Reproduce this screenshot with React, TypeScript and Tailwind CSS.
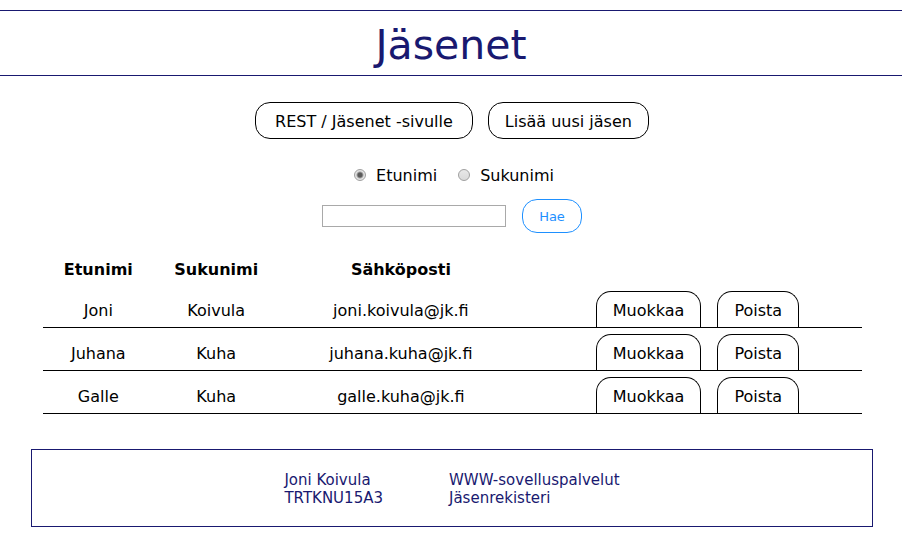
import { useState } from "react";

const members = [
  { first: "Joni", last: "Koivula", email: "joni.koivula@jk.fi" },
  { first: "Juhana", last: "Kuha", email: "juhana.kuha@jk.fi" },
  { first: "Galle", last: "Kuha", email: "galle.kuha@jk.fi" },
];

const pill =
  "rounded-[15px] border border-black pt-[9px] pb-[6px] text-center leading-5 text-black";
const tab =
  "h-9 rounded-t-[15px] border border-b-0 border-black px-4 pt-[2px] leading-5 text-black";
const cell = "border-b border-black pt-[10px]";
const radio =
  "size-3 appearance-none rounded-full border border-[#a0a0a0] bg-[linear-gradient(#e8e8e8,#dadada)] checked:bg-[radial-gradient(circle,#5a5a5a_2px,#e4e4e4_4px)]";

export default function App() {
  const [field, setField] = useState("etunimi");
  const [query, setQuery] = useState("");

  return (
    <div className="bg-white pt-[10px] font-['Verdana','DejaVu_Sans',sans-serif] text-base text-black">
      <header className="border-y border-[#191970] pt-[10px] pb-[6px] text-center">
        <h1 className="text-[41px] leading-12 text-[#191970]">Jäsenet</h1>
      </header>

      <nav className="mt-[26px] flex justify-center gap-[15px] pl-[2px]">
        <a href="#rest" className={`${pill} px-[19px]`}>REST / Jäsenet -sivulle</a>
        <a href="#uusi" className={`${pill} px-4`}>Lisää uusi jäsen</a>
      </nav>

      <form onSubmit={(e) => e.preventDefault()}>
        <div className="mt-[25px] flex justify-center gap-[21px] pl-[6px] leading-5">
          <label className="flex items-center gap-[10px]">
            <input type="radio" name="field" value="etunimi" className={radio} checked={field === "etunimi"} onChange={() => setField("etunimi")} />
            <span className="pt-[2px]">Etunimi</span>
          </label>
          <label className="flex items-center gap-[10px]">
            <input type="radio" name="field" value="sukunimi" className={radio} checked={field === "sukunimi"} onChange={() => setField("sukunimi")} />
            <span className="pt-[2px]">Sukunimi</span>
          </label>
        </div>
        <div className="mt-[13px] flex items-center justify-center gap-4 pl-[2px]">
          <input
            type="text"
            aria-label="Hakusana"
            value={query}
            onChange={(e) => setQuery(e.target.value)}
            className="h-[22px] w-[184px] border border-[#a9a9a9] px-1 text-[13px]"
          />
          <button type="submit" className="h-[34px] rounded-[15px] border border-[#1e90ff] px-4 pt-[2px] text-[13px] text-[#1e90ff]">
            Hae
          </button>
        </div>
      </form>

      <main className="mt-[26px] pr-10 pl-[43px]">
        <table className="w-full table-fixed border-separate border-spacing-0 text-center leading-5">
          <colgroup>
            <col className="w-[13.5%]" />
            <col className="w-[15.3%]" />
            <col className="w-[29.8%]" />
            <col />
          </colgroup>
          <thead>
            <tr className="h-[26px] align-top">
              <th scope="col" className="pt-px">Etunimi</th>
              <th scope="col" className="pt-px">Sukunimi</th>
              <th scope="col" className="pt-px">Sähköposti</th>
              <td />
            </tr>
          </thead>
          <tbody>
            {members.map((m) => (
              <tr key={m.email} className="h-[43px]">
                <td className={cell}>{m.first}</td>
                <td className={cell}>{m.last}</td>
                <td className={cell}>{m.email}</td>
                <td className="border-b border-black pt-[6px] pl-[10px]">
                  <div className="flex justify-center gap-4">
                    <button type="button" className={tab}>Muokkaa</button>
                    <button type="button" className={tab}>Poista</button>
                  </div>
                </td>
              </tr>
            ))}
          </tbody>
        </table>
      </main>

      <footer className="mt-[35px] mr-[29px] ml-[31px] flex justify-center gap-[66px] border border-[#191970] pt-[21px] pb-[19px] text-[15px] leading-[18px] text-[#191970]">
        <p>Joni Koivula<br />TRTKNU15A3</p>
        <p>WWW-sovelluspalvelut<br />Jäsenrekisteri</p>
      </footer>
    </div>
  );
}
